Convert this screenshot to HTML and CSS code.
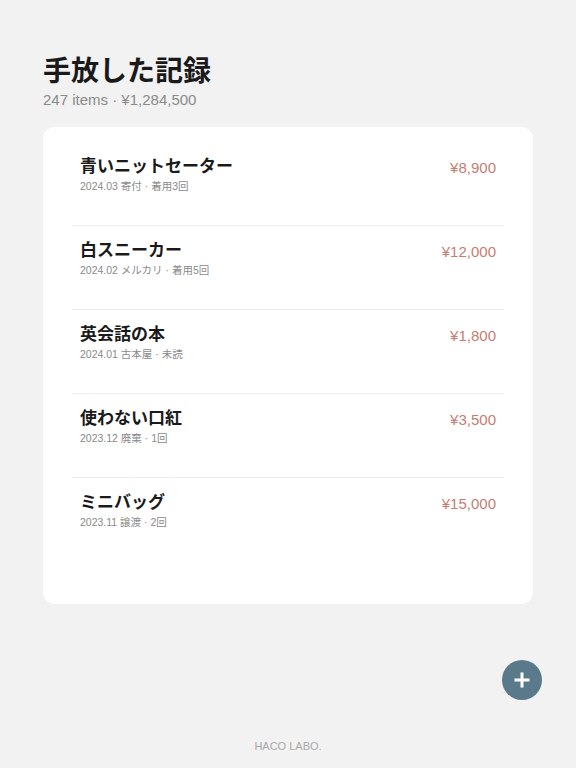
FILE: index.html
```html
<!DOCTYPE html>
<html lang="ja">
<head>
<meta charset="utf-8">
<link rel="stylesheet" href="styles.css">
</head>
<body>
<div class="page">
  <header class="head">
    <h1 class="title">手放した記録</h1>
    <p class="summary">247 items · ¥1,284,500</p>
  </header>
  <main class="card">
    <ul class="list">
      <li class="row">
        <div class="info"><div class="name">青いニットセーター</div><div class="meta">2024.03 寄付 · 着用3回</div></div>
        <div class="price">¥8,900</div>
      </li>
      <li class="row">
        <div class="info"><div class="name">白スニーカー</div><div class="meta">2024.02 メルカリ · 着用5回</div></div>
        <div class="price">¥12,000</div>
      </li>
      <li class="row">
        <div class="info"><div class="name">英会話の本</div><div class="meta">2024.01 古本屋 · 未読</div></div>
        <div class="price">¥1,800</div>
      </li>
      <li class="row">
        <div class="info"><div class="name">使わない口紅</div><div class="meta">2023.12 廃棄 · 1回</div></div>
        <div class="price">¥3,500</div>
      </li>
      <li class="row">
        <div class="info"><div class="name">ミニバッグ</div><div class="meta">2023.11 譲渡 · 2回</div></div>
        <div class="price">¥15,000</div>
      </li>
    </ul>
  </main>
  <footer class="footer">HACO LABO.</footer>
  <button class="fab" aria-label="追加">
    <svg width="18" height="18" viewBox="0 0 18 18"><path d="M9 1.5v15M1.5 9h15" stroke="#fff" stroke-width="3" fill="none"/></svg>
  </button>
</div>
</body>
</html>
```
FILE: styles.css
```css
* { box-sizing: border-box; }
html, body { margin: 0; padding: 0; }
body {
  background: #f2f2f2;
  font-family: "Liberation Sans", "Noto Sans CJK JP", sans-serif;
  color: #1a1a1a;
}
.page {
  position: relative;
  width: 576px;
  height: 768px;
  padding: 55px 43px 0;
}
.title {
  margin: 0;
  font-size: 28px;
  line-height: 34px;
  font-weight: 700;
  color: #1a1a1a;
}
.summary {
  margin: 2px 0 0;
  font-size: 15px;
  line-height: 18px;
  color: #8a8a8a;
}
.card {
  margin-top: 18px;
  background: #fff;
  border-radius: 12px;
  height: 477px;
  padding: 15px 29px 0;
}
.list { list-style: none; margin: 0; padding: 0; }
.row {
  height: 84px;
  display: flex;
  justify-content: space-between;
  align-items: flex-start;
  padding: 14px 8px 0;
  border-bottom: 1px solid #eeeeee;
}
.row:last-child { border-bottom: none; }
.name {
  font-size: 17px;
  line-height: 22px;
  font-weight: 700;
  color: #1a1a1a;
}
.meta {
  margin-top: 1px;
  font-size: 10.5px;
  line-height: 14px;
  color: #8a8a8a;
}
.price {
  margin-top: 2px;
  font-size: 15px;
  line-height: 20px;
  color: #c67d72;
}
.footer {
  position: absolute;
  left: 0; right: 0;
  top: 739px;
  text-align: center;
  font-size: 11px;
  line-height: 14px;
  color: #a8a8a8;
}
.fab {
  position: absolute;
  left: 502px;
  top: 660px;
  width: 40px;
  height: 40px;
  border-radius: 50%;
  border: none;
  padding: 0;
  background: #5a7a8c;
  display: flex;
  align-items: center;
  justify-content: center;
}
```
